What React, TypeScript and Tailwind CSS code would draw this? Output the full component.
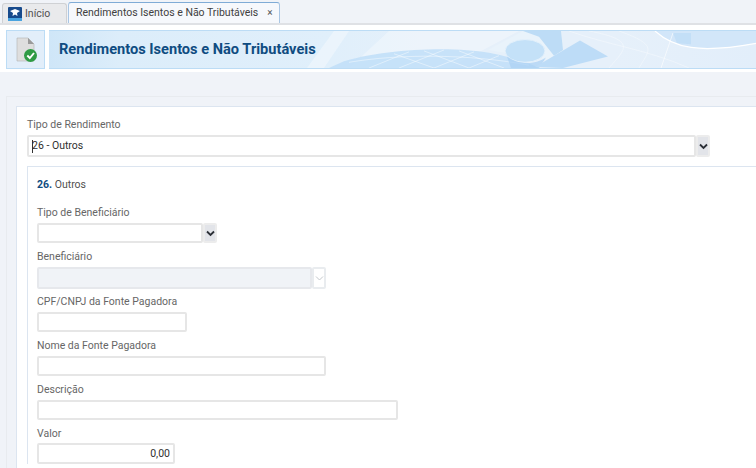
const labelClass = 'block text-[10.5px] leading-[14px] text-[#666666]';
const inputClass = 'h-[20px] border-2 border-[#e6e6e6] bg-white rounded-[2px]';

function ChevronBtn({ disabled }: { disabled?: boolean }) {
  return (
    <div className={`w-[14px] h-full flex items-center justify-center border-2 rounded-[2px] ${disabled ? 'bg-white border-[#e9ecef]' : 'bg-[#e2e4e9] border-[#ececec]'}`}>
      <svg width="9" height="7" viewBox="0 0 9 7">
        <path d="M1 1.5 L4.5 5 L8 1.5" fill="none" stroke={disabled ? '#c4c8cc' : '#2b2f36'} strokeWidth={disabled ? 1 : 1.8} />
      </svg>
    </div>
  );
}

function BannerArt() {
  return (
    <svg className="absolute inset-0 w-full h-full" viewBox="0 0 707 39" preserveAspectRatio="none">
      <defs>
        <linearGradient id="bannerBg" x1="0" y1="0" x2="1" y2="0">
          <stop offset="0" stopColor="#cfe6f8" />
          <stop offset="0.1" stopColor="#dcedfa" />
          <stop offset="0.4" stopColor="#e0effb" />
          <stop offset="0.55" stopColor="#e6f0fa" />
          <stop offset="0.8" stopColor="#e6f0fa" />
          <stop offset="1" stopColor="#e2eefa" />
        </linearGradient>
      </defs>
      <rect width="707" height="39" fill="url(#bannerBg)" />
      {/* left diagonal sheen */}
      <path d="M258 39 L285 0 L300 0 L275 39 Z" fill="#ffffff" opacity="0.35" />
      <path d="M340 0 H470 L400 39 H300 Z" fill="#ffffff" opacity="0.3" />
      {/* globe with mesh */}
      <path d="M295 32 C330 20 400 15 440 23 C460 27 478 32 490 39 H280 Z" fill="#bfdef8" opacity="0.85" />
      <path d="M320 39 L360 22 M350 39 L395 20 M385 39 L425 22 M420 39 L450 26 M345 24 L385 39 M375 21 L420 39 M410 21 L455 39 M300 33 C350 24 420 24 480 36" stroke="#ffffff" strokeWidth="0.7" opacity="0.65" fill="none" />
      {/* shapes around the circle */}
      <path d="M439 20 L474 0 H512 L514 20 L499 30 Z" fill="#e9f3fb" />
      <path d="M474 0 H512 L514 20 L505 26 L490 6 Z" fill="#bddcf6" />
      <ellipse cx="476" cy="21" rx="20" ry="12" fill="#c4e1f8" stroke="#e4f1fb" />
      <path d="M458 27 C470 36 485 36 497 28 L490 39 H462 Z" fill="#a9d0f4" opacity="0.7" />
      <path d="M486 38 L531 10 L559 27 L514 39 Z" fill="#bddcf7" />
      {/* mesh on the right */}
      <path d="M560 39 C575 20 590 10 540 0 M590 39 C600 20 610 15 570 0 M520 0 C560 15 600 20 640 39" stroke="#ffffff" strokeWidth="0.5" opacity="0.7" fill="none" />
      <path d="M606 0 C625 18 650 24 707 13 V0 Z" fill="#d2e6f9" />
      <path d="M624 2 H642 V14 L628 13 Z" fill="#bcdcf6" opacity="0.7" />
      <path d="M606 0 C625 18 650 24 707 13" stroke="#ffffff" strokeWidth="1.3" fill="none" />
      <path d="M624 2 L612 39" stroke="#ffffff" strokeWidth="0.8" opacity="0.8" />
    </svg>
  );
}

export default function App() {
  return (
    <div className="w-[756px] h-[468px] overflow-hidden bg-[#f0f3f8]" style={{ fontFamily: 'Roboto, sans-serif' }}>
      {/* tab strip */}
      <div className="h-[25px] flex items-end pl-[2px] gap-[1px] border-b-[2px] border-[#dfe1e5]">
        <div className="w-[65px] h-[20px] flex items-center gap-[3px] pl-[5px] bg-[#e9eaec] border border-b-0 border-[#cfd1d4] rounded-t-[3px]">
          <svg width="14" height="14" viewBox="0 0 14 14">
            <rect width="14" height="14" rx="1" fill="#174a8c" />
            <rect y="11" width="14" height="3" fill="#4aa3df" />
            <path d="M2 4 L7 2 L12 4 L9 6 L9.5 9 L7 7.5 L4.5 9 L5 6 Z" fill="#ffffff" />
          </svg>
          <span className="text-[10.5px] text-[#505050]">Início</span>
        </div>
        <div className="w-[212px] h-[21px] flex items-center pl-[7px] bg-[#f6f8fc] border border-b-0 border-[#a9c6e4] border-t-[#7fabd6] rounded-t-[3px]">
          <span className="text-[10.5px] text-[#404040] whitespace-nowrap">Rendimentos Isentos e Não Tributáveis</span>
          <span className="ml-[9px] text-[10px] leading-none text-[#555]">×</span>
        </div>
      </div>

      {/* title band */}
      <div className="h-[47px] bg-white flex items-start gap-[4px] pl-[6px] pt-[5px]">
        <div className="w-[39px] h-[39px] flex items-center justify-center bg-[#e2eefa] border border-[#bcdcf5]">
          <svg width="24" height="26" viewBox="0 0 24 26">
            <path d="M3 1 H14 L20 7 V24 H3 Z" fill="#dedede" stroke="#b4b4b4" strokeWidth="0.6" />
            <path d="M14 1 V7 H20 Z" fill="#9a9a9a" />
            <circle cx="16.5" cy="18.5" r="6.5" fill="#2f9b45" />
            <path d="M13.3 18.5 L15.8 21 L20 16" fill="none" stroke="#ffffff" strokeWidth="1.9" />
          </svg>
        </div>
        <div className="relative flex-1 h-[39px] flex items-center pl-[10px] border-y border-[#bcdcf5] overflow-hidden">
          <BannerArt />
          <h1 className="relative text-[14.6px] font-bold text-[#0f4c81] whitespace-nowrap">Rendimentos Isentos e Não Tributáveis</h1>
        </div>
      </div>

      {/* form */}
      <div className="ml-[6px] mt-[24px] pl-[9px] pt-[9px] border-l border-t border-[#e8ebef]">
        <div className="bg-white border-l border-t border-[#dce5f0] pl-[10px] pt-[11px] h-[400px]">
          <label className={labelClass}>Tipo de Rendimento</label>
          <div className="mt-[3px] w-[683px] h-[22px] flex">
            <div className="flex-1 flex items-center pl-[3px] border-2 border-[#e6e6e6] rounded-[2px]">
              <span className="w-px h-[13px] bg-[#333]" />
              <span className="text-[10.5px] text-[#303030] -ml-px">26 - Outros</span>
            </div>
            <ChevronBtn />
          </div>

          <div className="mt-[9px] border-l border-t border-[#dce5f0] pl-[9px] pt-[11px]">
            <p className="text-[10.5px] leading-[14px] text-[#505050]"><b className="text-[#0f4c81]">26.</b> Outros</p>

            <label className={`${labelClass} mt-[14px]`}>Tipo de Beneficiário</label>
            <div className="mt-[3px] w-[180px] h-[20px] flex">
              <div className="flex-1 border-2 border-[#e6e6e6] rounded-[2px]" />
              <ChevronBtn />
            </div>

            <label className={`${labelClass} mt-[7px]`}>Beneficiário</label>
            <div className="mt-[3px] w-[289px] h-[22px] flex">
              <div className="flex-1 bg-[#f0f3f7] border-2 border-[#e6e8ec] rounded-[2px]" />
              <ChevronBtn disabled />
            </div>

            <label className={`${labelClass} mt-[6px]`}>CPF/CNPJ da Fonte Pagadora</label>
            <div className={`mt-[3px] w-[150px] ${inputClass}`} />

            <label className={`${labelClass} mt-[7px]`}>Nome da Fonte Pagadora</label>
            <div className={`mt-[3px] w-[289px] ${inputClass}`} />

            <label className={`${labelClass} mt-[7px]`}>Descrição</label>
            <div className={`mt-[3px] w-[361px] ${inputClass}`} />

            <label className={`${labelClass} mt-[7px]`}>Valor</label>
            <div className="mt-[2px] w-[138px] h-[21px] flex items-center justify-end pr-[3px] border-2 border-[#e6e6e6] rounded-[2px]">
              <span className="text-[10.5px] text-[#303030]">0,00</span>
            </div>
          </div>
        </div>
      </div>
    </div>
  );
}
